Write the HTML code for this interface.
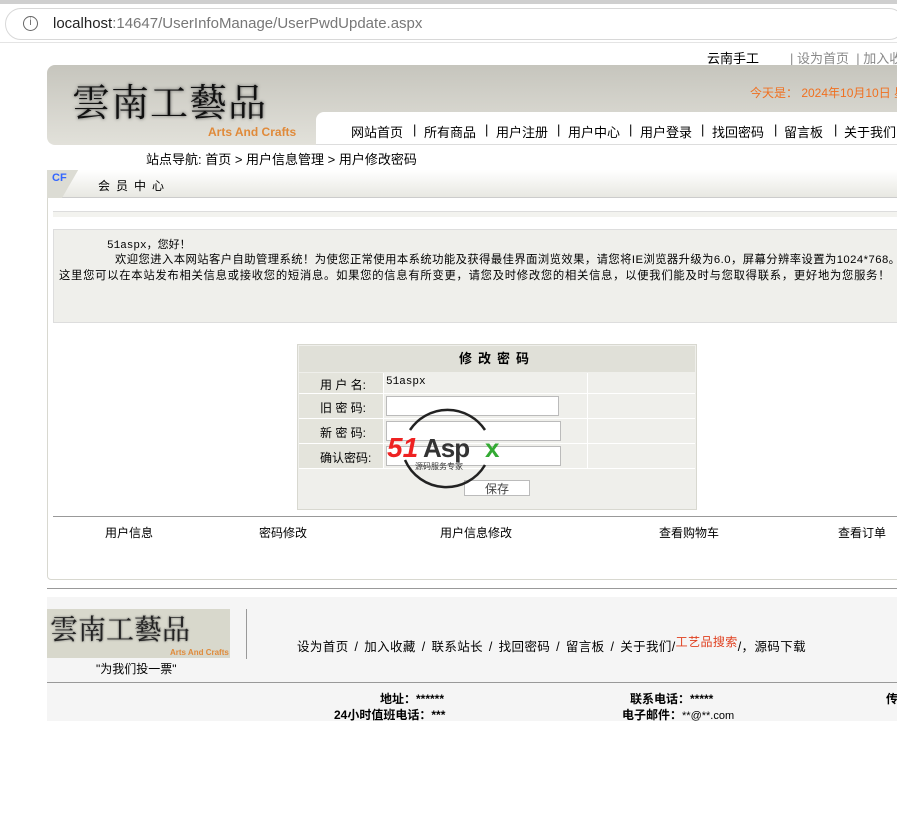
<!DOCTYPE html>
<html><head><meta charset="utf-8">
<style>
*{margin:0;padding:0;box-sizing:border-box}
body{width:897px;height:826px;overflow:hidden;background:#fff;font-family:"Liberation Sans","Noto Sans CJK SC","WenQuanYi Zen Hei",sans-serif;font-size:12px;color:#000;position:relative}
.a{position:absolute;white-space:nowrap}
.n{position:absolute;top:122px;font-size:13px;white-space:nowrap}
</style></head><body>
<div class="a" style="left:0;top:0;width:897px;height:4px;background:#cfcfcf"></div>
<div class="a" style="left:5px;top:8px;width:900px;height:32px;border:1px solid #d8d8d8;border-radius:16px;background:#fff"></div>
<div class="a" style="left:23px;top:16px;width:15px;height:15px;border:1.3px solid #666;border-radius:50%;font-size:10px;line-height:12px;text-align:center;color:#666">i</div>
<div class="a" style="left:53px;top:15px;font-size:15px;color:#777"><span style="color:#222">localhost</span>:14647/UserInfoManage/UserPwdUpdate.aspx</div>
<div class="a" style="left:0;top:42px;width:897px;height:1px;background:#e4e4e4"></div>

<div class="a" style="left:707px;top:48px;font-size:13px">云南手工</div>
<div class="a" style="left:790px;top:48px;font-size:13px;color:#888">| 设为首页 &nbsp;| 加入收藏</div>

<div class="a" style="left:47px;top:65px;width:860px;height:80px;border-radius:8px 0 0 8px;background:linear-gradient(#c6c5bd,#e2e1da)"></div>
<div class="a" style="left:72px;top:72px;font-family:'Noto Serif CJK SC',serif;font-size:38px;letter-spacing:1px;color:#111;text-shadow:0 0 3px #555">雲南工藝品</div>
<div class="a" style="left:208px;top:125px;font-size:12px;font-weight:bold;color:#e08a3a">Arts And Crafts</div>
<div class="a" style="left:750px;top:84px;font-size:12px;color:#f07020">今天是： 2024年10月10日 星期四</div>
<div class="a" style="left:316px;top:112px;width:600px;height:32px;background:#fff;border-radius:8px 0 0 0"></div>
<div class="n" style="left:351px">网站首页</div>
<div class="n" style="left:413px">|</div><div class="n" style="left:424px">所有商品</div>
<div class="n" style="left:485px">|</div><div class="n" style="left:496px">用户注册</div>
<div class="n" style="left:557px">|</div><div class="n" style="left:568px">用户中心</div>
<div class="n" style="left:629px">|</div><div class="n" style="left:640px">用户登录</div>
<div class="n" style="left:701px">|</div><div class="n" style="left:712px">找回密码</div>
<div class="n" style="left:774px">|</div><div class="n" style="left:784px">留言板</div>
<div class="n" style="left:834px">|</div><div class="n" style="left:844px">关于我们</div>
<div class="a" style="left:316px;top:144px;width:581px;height:1px;background:#ddd"></div>

<div class="a" style="left:146px;top:149px;font-size:13px">站点导航: 首页 &gt; 用户信息管理 &gt; 用户修改密码</div>

<div class="a" style="left:47px;top:170px;width:860px;height:410px;border:1px solid #d8d8d0;border-radius:0 0 4px 4px"></div>
<div class="a" style="left:47px;top:170px;width:860px;height:28px;background:linear-gradient(#fff,#e8e8e2);border-bottom:1px solid #ccc"></div>
<div class="a" style="left:47px;top:170px;width:40px;height:28px;background:linear-gradient(120deg,#dcdcd4 55%,transparent 56%)"></div>
<div class="a" style="left:52px;top:172px;font-size:11px;font-weight:bold;color:#3366ff">CF</div>
<div class="a" style="left:98px;top:177px;font-size:12px;letter-spacing:6px">会员中心</div>

<div class="a" style="left:53px;top:211px;width:850px;height:6px;background:#f3f3ef;border-top:1px solid #ddd"></div>
<div class="a" style="left:53px;top:229px;width:850px;height:94px;background:#efefeb;border:1px solid #ddd"></div>
<div class="a" style="left:107px;top:236px;font-family:'Liberation Mono','WenQuanYi Zen Hei',monospace;font-size:11px">51aspx，您好！</div>
<div class="a" style="left:115px;top:251px;font-size:11.3px;letter-spacing:0.45px">欢迎您进入本网站客户自助管理系统！为使您正常使用本系统功能及获得最佳界面浏览效果，请您将IE浏览器升级为6.0，屏幕分辨率设置为1024*768。</div>
<div class="a" style="left:59px;top:267px;font-size:11.3px;letter-spacing:0.75px">这里您可以在本站发布相关信息或接收您的短消息。如果您的信息有所变更，请您及时修改您的相关信息，以便我们能及时与您取得联系，更好地为您服务！</div>

<div class="a" style="left:297px;top:344px;width:400px;height:166px;border:1px solid #d8d8d0;background:#efefeb"></div>
<div class="a" style="left:299px;top:346px;width:396px;height:26px;background:#e0e0d8;text-align:center;font-weight:bold;font-size:13px;line-height:26px;letter-spacing:6px">修改密码</div>
<div class="a" style="left:299px;top:373px;width:84px;height:95px;background:#e4e4dc"></div>
<div class="a" style="left:299px;top:393px;width:396px;height:1px;background:#fff"></div>
<div class="a" style="left:299px;top:418px;width:396px;height:1px;background:#fff"></div>
<div class="a" style="left:299px;top:443px;width:396px;height:1px;background:#fff"></div>
<div class="a" style="left:299px;top:468px;width:396px;height:1px;background:#fff"></div>
<div class="a" style="left:383px;top:373px;width:1px;height:95px;background:#fff"></div>
<div class="a" style="left:587px;top:373px;width:1px;height:95px;background:#fff"></div>
<div class="a" style="left:320px;top:376px;font-size:12px">用 户 名:</div>
<div class="a" style="left:320px;top:399px;font-size:12px">旧 密 码:</div>
<div class="a" style="left:320px;top:424px;font-size:12px">新 密 码:</div>
<div class="a" style="left:320px;top:449px;font-size:12px">确认密码:</div>
<div class="a" style="left:386px;top:376px;font-family:'Liberation Mono',monospace;font-size:11px">51aspx</div>
<div class="a" style="left:386px;top:396px;width:173px;height:20px;background:#fff;border:1px solid #bbb"></div>
<div class="a" style="left:386px;top:421px;width:175px;height:20px;background:#fff;border:1px solid #bbb"></div>
<div class="a" style="left:386px;top:446px;width:175px;height:20px;background:#fff;border:1px solid #bbb"></div>
<div class="a" style="left:464px;top:480px;width:66px;height:16px;background:#fff;border:1px solid #bbb;text-align:center;font-size:12px;line-height:16px;color:#444">保存</div>
<svg class="a" style="left:385px;top:400px" width="130" height="95"><path d="M25 30 A45 45 0 0 1 100 30" fill="none" stroke="#222" stroke-width="2.5"/><path d="M20 60 A45 45 0 0 0 100 65" fill="none" stroke="#222" stroke-width="2.5"/><text x="2" y="57" font-family="Liberation Sans" font-weight="bold" font-style="italic" font-size="28" fill="#e22">51</text><text x="38" y="57" font-family="Liberation Sans" font-weight="bold" font-size="26" fill="#333" letter-spacing="-1">Asp</text><text x="100" y="57" font-family="Liberation Sans" font-weight="bold" font-size="26" fill="#3a3">x</text><text x="30" y="69" font-size="8" fill="#333" font-family="Noto Sans CJK SC">源码服务专家</text></svg>

<div class="a" style="left:53px;top:516px;width:850px;height:1px;background:#999"></div>
<div class="a" style="left:105px;top:524px;font-size:12px">用户信息</div>
<div class="a" style="left:259px;top:524px;font-size:12px">密码修改</div>
<div class="a" style="left:440px;top:524px;font-size:12px">用户信息修改</div>
<div class="a" style="left:659px;top:524px;font-size:12px">查看购物车</div>
<div class="a" style="left:838px;top:524px;font-size:12px">查看订单</div>

<div class="a" style="left:47px;top:588px;width:850px;height:1px;background:#999"></div>
<div class="a" style="left:47px;top:597px;width:850px;height:124px;background:#f5f5f5"></div>
<div class="a" style="left:47px;top:609px;width:183px;height:49px;background:#d8d8cc"></div>
<div class="a" style="left:50px;top:608px;font-family:'Noto Serif CJK SC',serif;font-size:28px;color:#222;text-shadow:0 0 2px #555">雲南工藝品</div>
<div class="a" style="left:170px;top:648px;font-size:8px;font-weight:bold;color:#e08a3a">Arts And Crafts</div>
<div class="a" style="left:246px;top:609px;width:1px;height:50px;background:#999"></div>
<div class="a" style="left:96px;top:660px;font-size:12px">"为我们投一票"</div>
<div class="a" style="left:297px;top:636px;font-size:12.5px;letter-spacing:0.4px;word-spacing:2px">设为首页 / 加入收藏 / 联系站长 / 找回密码 / 留言板 / 关于我们/<span style="color:#e04020;font-size:12px;position:relative;top:-5px">工艺品搜索</span>/，源码下载</div>
<div class="a" style="left:47px;top:682px;width:850px;height:1px;background:#999"></div>
<div class="a" style="left:380px;top:690px;font-weight:bold;font-size:12px">地址：******</div>
<div class="a" style="left:334px;top:706px;font-weight:bold;font-size:12px">24小时值班电话：***</div>
<div class="a" style="left:630px;top:690px;font-weight:bold;font-size:12px">联系电话：*****</div>
<div class="a" style="left:622px;top:706px;font-weight:bold;font-size:12px">电子邮件：<span style="font-weight:normal;font-size:11px">**@**.com</span></div>
<div class="a" style="left:886px;top:690px;font-weight:bold;font-size:12px">传</div>
</body></html>
